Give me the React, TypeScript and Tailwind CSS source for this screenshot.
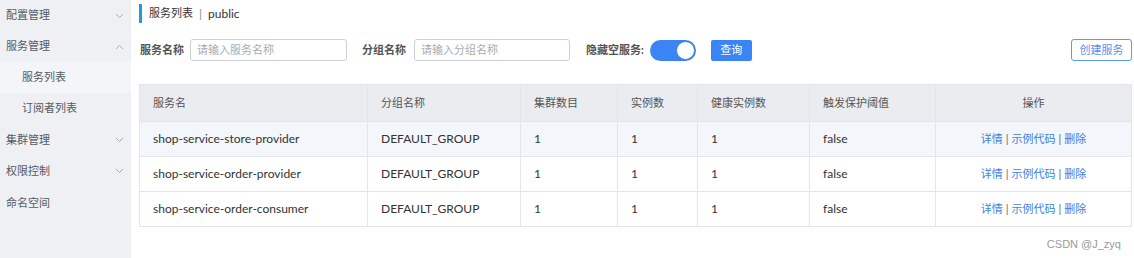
const font = "font-['Lato','Noto_Sans_CJK_SC',sans-serif]";

type MenuItem = { label: string; sub?: boolean; active?: boolean; arrow?: "down" | "up" };

const menu: MenuItem[] = [
  { label: "配置管理", arrow: "down" },
  { label: "服务管理", arrow: "up" },
  { label: "服务列表", sub: true, active: true },
  { label: "订阅者列表", sub: true },
  { label: "集群管理", arrow: "down" },
  { label: "权限控制", arrow: "down" },
  { label: "命名空间" },
];

const rows = [
  { name: "shop-service-store-provider", shaded: true },
  { name: "shop-service-order-provider", shaded: false },
  { name: "shop-service-order-consumer", shaded: false },
];

function Chevron({ up }: { up?: boolean }) {
  return (
    <svg width="9" height="6" viewBox="0 0 9 6" className="text-[#a6abb3]">
      <path d={up ? "M1 5L4.5 1.5L8 5" : "M1 1L4.5 4.5L8 1"} fill="none" stroke="currentColor" strokeWidth="1" />
    </svg>
  );
}

function Sidebar() {
  return (
    <div className="w-[131px] shrink-0 bg-[#eef0f3] h-[258px]">
      {menu.map((m, i) => (
        <div
          key={i}
          className={`${i >= 4 ? "h-[31.5px]" : "h-[31px]"} flex items-center justify-between pr-[7px] text-[11px] text-[#555a61] ${m.sub ? "pl-[22px]" : "pl-[6px]"} ${m.active ? "bg-[#f4f5f8]" : ""}`}
        >
          <span>{m.label}</span>
          {m.arrow && <Chevron up={m.arrow === "up"} />}
        </div>
      ))}
    </div>
  );
}

const cols = ["w-[228px]", "w-[153px]", "w-[97px]", "w-[80px]", "w-[112px]", "w-[126px]", "w-[196px]"];

export default function App() {
  return (
    <div className={`${font} flex w-[1134px] h-[258px] bg-white overflow-hidden`}>
      <Sidebar />
      <div className="flex-1 pl-[8px] pr-[3px] relative">
        <div className="mt-[4px] h-[19px] border-l-[3px] border-[#1b9be6] pl-[7px] flex items-center text-[12px] text-[#333]">
          <span className="text-[11px]">服务列表</span> <span className="mx-[6px] text-[#888]">|</span> public
        </div>
        <div className="mt-[16px] flex items-center h-[22px] text-[11px]">
          <span className="font-bold text-[#555] ml-[1px]">服务名称</span>
          <div className="ml-[6px] w-[157px] h-[22px] border border-[#cdd1d6] rounded-[3px] flex items-center pl-[6px] text-[#a8acb2]">请输入服务名称</div>
          <span className="font-bold text-[#555] ml-[15px]">分组名称</span>
          <div className="ml-[8px] w-[156px] h-[22px] border border-[#cdd1d6] rounded-[3px] flex items-center pl-[6px] text-[#a8acb2]">请输入分组名称</div>
          <span className="font-bold text-[#555] ml-[16px]">隐藏空服务:</span>
          <div className="ml-[6px] w-[46px] h-[21px] rounded-full bg-[#3b84f4] relative">
            <div className="absolute right-[1px] top-[1px] w-[19px] h-[19px] rounded-full bg-white border border-[#3b84f4]" />
          </div>
          <div className="ml-[15px] w-[41px] h-[21px] rounded-[2px] bg-[#3b84f4] text-white flex items-center justify-center">查询</div>
          <div className="ml-auto w-[61px] h-[22px] rounded-[3px] border border-[#5a9af6] text-[#5a8ff0] flex items-center justify-center">创建服务</div>
        </div>
        <div className="mt-[23px] w-[993px] border border-[#e2e5e9] text-[12px] text-[#333]">
          <div className="flex h-[36px] bg-[#ebecf0] text-[#555] text-[11px]">
            {["服务名", "分组名称", "集群数目", "实例数", "健康实例数", "触发保护阈值"].map((h, i) => (
              <div key={i} className={`${cols[i]} border-r border-[#e2e5e9] flex items-center pl-[13px]`}>{h}</div>
            ))}
            <div className="flex-1 flex items-center justify-center">操作</div>
          </div>
          {rows.map((r, i) => (
            <div key={i} className={`flex h-[35px] border-t border-[#e2e5e9] ${r.shaded ? "bg-[#f3f6fa]" : "bg-white"}`}>
              {[r.name, "DEFAULT_GROUP", "1", "1", "1", "false"].map((c, j) => (
                <div key={j} className={`${cols[j]} border-r border-[#e2e5e9] flex items-center pl-[13px]`}>{c}</div>
              ))}
              <div className="flex-1 flex items-center justify-center text-[#3d7fe6] text-[11px]">
                详情<span className="mx-[3px] text-[#666]">|</span>示例代码<span className="mx-[3px] text-[#666]">|</span>删除
              </div>
            </div>
          ))}
        </div>
        <div className="absolute right-[14px] top-[236px] text-[11px] text-[#9a9a9a] font-['Liberation_Sans',sans-serif]">CSDN @J_zyq</div>
      </div>
    </div>
  );
}
